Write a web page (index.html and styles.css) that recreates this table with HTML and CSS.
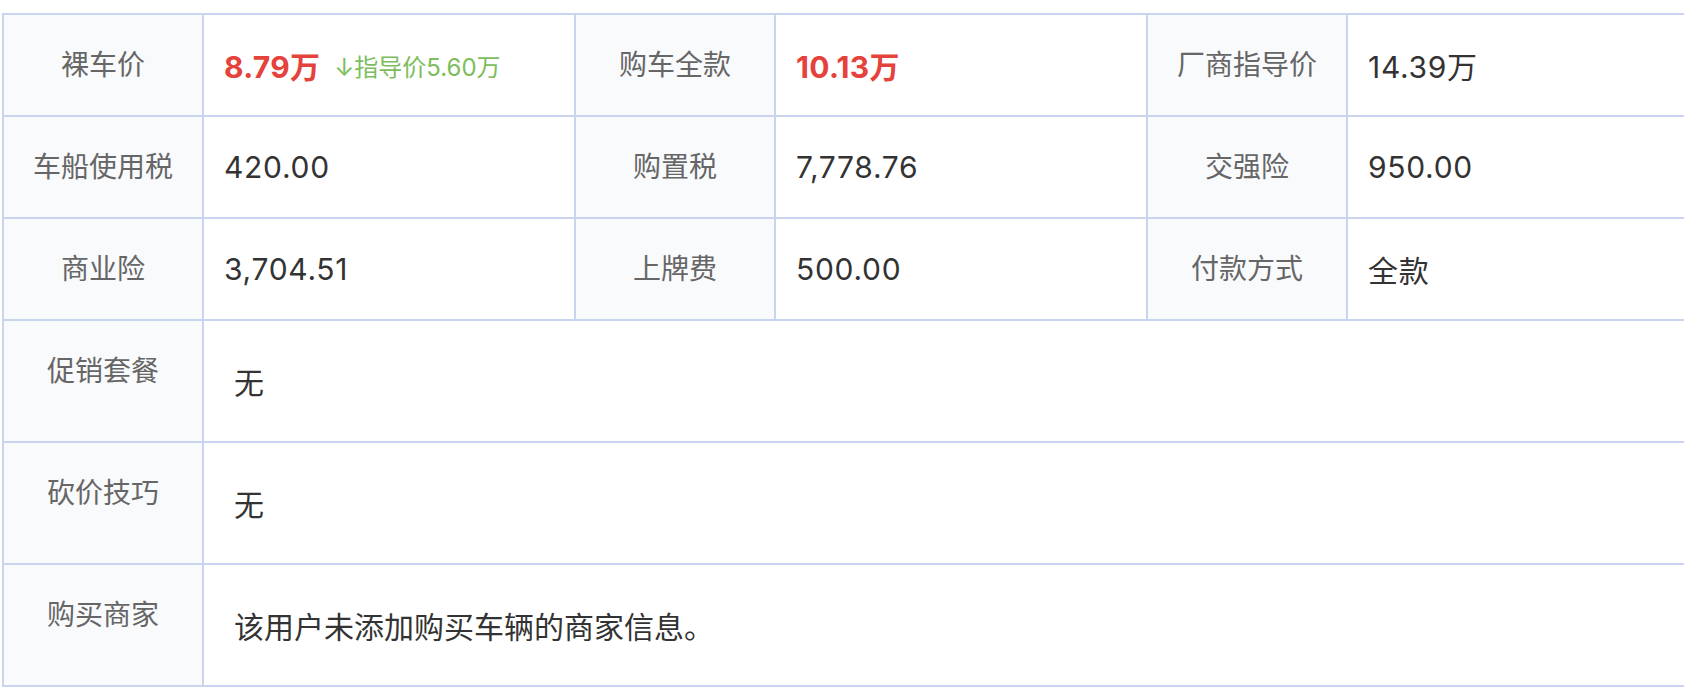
FILE: index.html
```html
<!DOCTYPE html>
<html lang="zh-CN">
<head>
<meta charset="utf-8">
<title>价格明细</title>
<link rel="stylesheet" href="styles.css">
</head>
<body>
<div class="page">
  <div class="grid">
    <div class="lbl"><span>裸车价</span></div>
    <div class="val"><span class="red">8.79万</span><span class="green">↓指导价5.60万</span></div>
    <div class="lbl"><span>购车全款</span></div>
    <div class="val"><span class="red">10.13万</span></div>
    <div class="lbl"><span>厂商指导价</span></div>
    <div class="val">14.39万</div>

    <div class="lbl"><span>车船使用税</span></div>
    <div class="val">420.00</div>
    <div class="lbl"><span>购置税</span></div>
    <div class="val">7,778.76</div>
    <div class="lbl"><span>交强险</span></div>
    <div class="val">950.00</div>

    <div class="lbl"><span>商业险</span></div>
    <div class="val">3,704.51</div>
    <div class="lbl"><span>上牌费</span></div>
    <div class="val">500.00</div>
    <div class="lbl"><span>付款方式</span></div>
    <div class="val">全款</div>

    <div class="lbl tall"><span>促销套餐</span></div>
    <div class="val wide">无</div>

    <div class="lbl tall"><span>砍价技巧</span></div>
    <div class="val wide">无</div>

    <div class="lbl tall"><span>购买商家</span></div>
    <div class="val wide">该用户未添加购买车辆的商家信息。</div>
  </div>
</div>
</body>
</html>
```
FILE: styles.css
```css
html, body {
  margin: 0;
  padding: 0;
  background: #ffffff;
  overflow: hidden;
}
.page {
  padding: 13px 0 0 2px;
  font-family: Inter, "Noto Sans CJK SC", sans-serif;
}
.grid {
  display: grid;
  width: max-content;
  grid-template-columns: 198px 370px 198px 370px 198px 370px;
  grid-template-rows: 100px 100px 100px 120px 120px 120px;
  gap: 2px;
  padding: 2px;
  background: #c9d4ef;
}
.lbl {
  background: #f9fafc;
  color: #666666;
  font-size: 28px;
  display: flex;
  justify-content: center;
  align-items: flex-start;
}
.lbl span {
  line-height: 100px;
}
.val {
  background: #ffffff;
  color: #333333;
  font-size: 30px;
  letter-spacing: 0.7px;
  display: flex;
  align-items: center;
  padding-left: 20px;
}
.val.wide {
  grid-column: span 5;
  padding-left: 30px;
  font-size: 30px;
  letter-spacing: 0;
}
.red {
  color: #e5423b;
  font-weight: 700;
  letter-spacing: 0.3px;
}
.green {
  color: #7dbd5c;
  font-size: 24px;
  letter-spacing: 0;
  margin-left: 14px;
}
```
